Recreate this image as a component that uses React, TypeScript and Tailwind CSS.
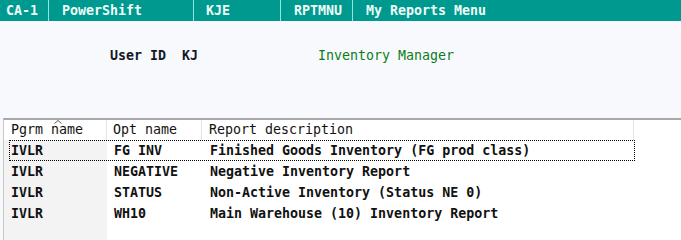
import React from "react";

const rows = [
  { pgm: "IVLR", opt: "FG INV", desc: "Finished Goods Inventory (FG prod class)" },
  { pgm: "IVLR", opt: "NEGATIVE", desc: "Negative Inventory Report" },
  { pgm: "IVLR", opt: "STATUS", desc: "Non-Active Inventory (Status NE 0)" },
  { pgm: "IVLR", opt: "WH10", desc: "Main Warehouse (10) Inventory Report" },
];

const mono = "font-['DejaVu_Sans_Mono',Consolas,monospace] text-[13.3px]";

export default function App() {
  return (
    <div className={`w-[681px] h-[240px] overflow-hidden bg-[#f8f9fd] ${mono} flex flex-col`}>
      {/* title bar */}
      <div className="flex h-[21px] bg-[#00998f] text-[#eefcf8] font-bold leading-[21px]">
        <div className="w-[48px] pl-[6px]">CA-1</div>
        <div className="w-[145px] pl-[13px] border-l border-[#8ee8e2]">PowerShift</div>
        <div className="w-[87px] pl-[12px] border-l border-[#8ee8e2]">KJE</div>
        <div className="w-[72px] pl-[13px] border-l border-[#8ee8e2]">RPTMNU</div>
        <div className="flex-1 pl-[13px] border-l border-[#8ee8e2]">My Reports Menu</div>
      </div>

      {/* user line */}
      <div className="flex mt-[27px] h-[16px] leading-[16px]">
        <span className="ml-[110px] w-[208px] font-bold text-[#111827] whitespace-pre">User ID  KJ</span>
        <span className="text-[#0b7d1c]">Inventory Manager</span>
      </div>

      {/* list */}
      <div className="mt-[54px] ml-[3px] flex-1 flex flex-col border-t-2 border-l border-t-[#a8a8a8] border-l-[#c8c8c8] bg-white">
        <div className="relative flex h-[20px] leading-[20px] text-[#111]">
          <div className="w-[103px] pl-[7px] border-r border-[#e3e3e3]">Pgrm name</div>
          <div className="w-[95px] pl-[6px] border-r border-[#e3e3e3]">Opt name</div>
          <div className="w-[432px] pl-[7px] border-r border-[#e3e3e3]">Report description</div>
          <svg className="absolute left-[50px] top-[0px]" width="8" height="4" viewBox="0 0 8 4">
            <path d="M0.5 3.5 L4 0.5 L7.5 3.5" fill="none" stroke="#555" strokeWidth="1" />
          </svg>
        </div>
        {rows.map((r, i) => (
          <div key={r.opt} className="relative flex h-[21px] leading-[21px] font-bold text-[#111]">
            <div className="w-[103px] pl-[7px] bg-[#f3f3f3]">{r.pgm}</div>
            <div className="w-[95px] pl-[7px]">{r.opt}</div>
            <div className="w-[432px] pl-[8px]">{r.desc}</div>
            {i === 0 && (
              <div className="absolute left-[5px] top-0 w-[626px] h-[21px] border border-dotted border-black" />
            )}
          </div>
        ))}
        <div className="flex-1 flex">
          <div className="w-[103px] bg-[#f3f3f3]" />
        </div>
      </div>
    </div>
  );
}
